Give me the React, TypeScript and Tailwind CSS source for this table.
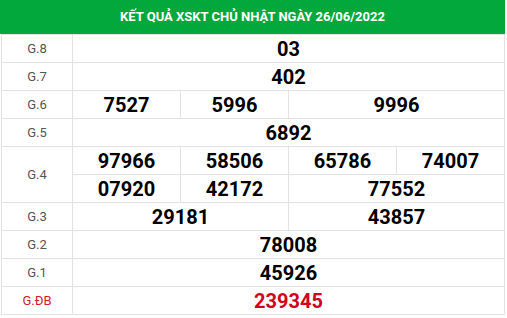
import React from 'react';

type Cell = { v: string; span: number };
type Row = { label: string; lines: Cell[][]; red?: boolean };

const rows: Row[] = [
    { label: 'G.8', lines: [[{ v: '03', span: 4 }]] },
    { label: 'G.7', lines: [[{ v: '402', span: 4 }]] },
    {
        label: 'G.6',
        lines: [
            [
                { v: '7527', span: 1 },
                { v: '5996', span: 1 },
                { v: '9996', span: 2 },
            ],
        ],
    },
    { label: 'G.5', lines: [[{ v: '6892', span: 4 }]] },
    {
        label: 'G.4',
        lines: [
            [
                { v: '97966', span: 1 },
                { v: '58506', span: 1 },
                { v: '65786', span: 1 },
                { v: '74007', span: 1 },
            ],
            [
                { v: '07920', span: 1 },
                { v: '42172', span: 1 },
                { v: '77552', span: 2 },
            ],
        ],
    },
    {
        label: 'G.3',
        lines: [
            [
                { v: '29181', span: 2 },
                { v: '43857', span: 2 },
            ],
        ],
    },
    { label: 'G.2', lines: [[{ v: '78008', span: 4 }]] },
    { label: 'G.1', lines: [[{ v: '45926', span: 4 }]] },
    { label: 'G.ĐB', lines: [[{ v: '239345', span: 4 }]], red: true },
];

export default function App() {
    return (
        <div className="w-[507px] bg-white font-['Roboto',_'Liberation_Sans',_sans-serif]">
            <div className="w-[505px]">
                {/* Header */}
                <div className="flex h-[34px] items-center justify-center bg-[#02a83b] text-[13px] font-bold text-white">
                    KẾT QUẢ XSKT CHỦ NHẬT NGÀY 26/06/2022
                </div>

                <table className="ml-px w-[503px] table-fixed border-collapse">
                    <colgroup>
                        <col className="w-[71px]" />
                        <col className="w-[108px]" />
                        <col className="w-[108px]" />
                        <col className="w-[108px]" />
                        <col className="w-[108px]" />
                    </colgroup>
                    <tbody>
                        {rows.map((row) =>
                            row.lines.map((line, i) => (
                                <tr key={row.label + i} className="h-[28px]">
                                    {i === 0 && (
                                        <td
                                            rowSpan={row.lines.length}
                                            className={`border border-[#e2e2e2] p-0 text-center text-[13px] ${
                                                row.red ? 'text-[#d0202a]' : 'text-[#555]'
                                            }`}
                                        >
                                            {row.label}
                                        </td>
                                    )}
                                    {line.map((c) => (
                                        <td
                                            key={c.v}
                                            colSpan={c.span}
                                            className={`border border-[#e2e2e2] p-0 text-center text-[20px] leading-none font-bold ${
                                                row.red ? 'text-[#d0021b]' : 'text-black'
                                            }`}
                                        >
                                            {c.v}
                                        </td>
                                    ))}
                                </tr>
                            )),
                        )}
                    </tbody>
                </table>
            </div>
        </div>
    );
}
